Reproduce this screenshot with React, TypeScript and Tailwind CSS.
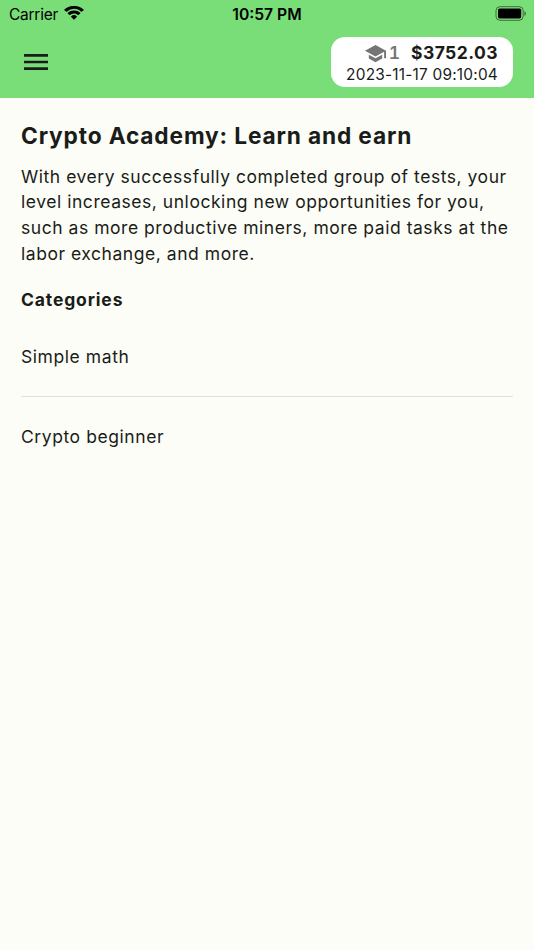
import { MdMenu, MdSchool } from 'react-icons/md';

const categories = ['Simple math', 'Crypto beginner'];

function StatusBar() {
  return (
    <div className="grid h-7 grid-cols-3 items-center pl-[9px] pr-[7px] text-black">
      <div className="flex items-center gap-[6px]">
        <span className="mt-px text-[15.5px] leading-none tracking-[-0.25px]">Carrier</span>
        <svg className="mb-[2px]" width="20" height="14" viewBox="0 0 20 14" fill="currentColor">
          <path d="M10 2.8c2.8 0 5.3 1.1 7.2 2.9.1.1.4.1.5 0l1.9-1.5c.2-.2.2-.4 0-.6A13.5 13.5 0 0 0 10 0 13.5 13.5 0 0 0 .4 3.6c-.2.2-.2.4 0 .6l1.9 1.5c.1.1.4.1.5 0A10.4 10.4 0 0 1 10 2.8z" />
          <path d="M10 7.4c1.5 0 2.9.6 4 1.5.2.1.4.1.5 0l1.7-1.5c.2-.2.2-.4 0-.6A9 9 0 0 0 10 4.6a9 9 0 0 0-6.2 2.2c-.2.2-.2.4 0 .6l1.7 1.5c.1.1.3.1.5 0a6 6 0 0 1 4-1.5z" />
          <path d="M12.8 10.3c.2.2.2.4 0 .6l-2.5 2.7c-.2.2-.4.2-.6 0l-2.5-2.7c-.2-.2-.2-.4 0-.6a4.3 4.3 0 0 1 5.6 0z" />
        </svg>
      </div>
      <div className="mr-[2px] mt-px whitespace-nowrap text-center text-[15.7px] font-semibold leading-none">
        10:57 PM
      </div>
      <div className="flex justify-end">
        <svg className="mb-[2px]" width="32" height="15" viewBox="0 0 32 15">
          <rect x="1" y="0.7" width="27.2" height="13.6" rx="4" fill="none" stroke="#000" strokeOpacity="0.5" />
          <rect x="3" y="2.6" width="23.2" height="9.8" rx="1.6" />
          <path d="M29.4 5.2v4.6c1-.4 1.5-1.3 1.5-2.3s-.5-1.9-1.5-2.3z" fillOpacity="0.5" />
        </svg>
      </div>
    </div>
  );
}

export default function App() {
  return (
    <div className="min-h-screen bg-[#fcfdf6] font-['Inter',sans-serif] text-[#1a1c19]">
      <header className="h-[98px] bg-[#7ade78]">
        <StatusBar />
        <div className="flex items-start justify-between px-5 pt-[9px]">
          <button type="button" aria-label="Menu" className="mt-[9px]">
            <MdMenu size={32} />
          </button>
          <div className="mr-px flex h-[50px] w-[182px] flex-col items-end rounded-[14px] bg-white pr-[15px] pt-[5px]">
            <div className="flex h-[22px] items-center text-[17.5px] font-bold leading-[22px]">
              <MdSchool size={23} className="mr-[2px] text-[#757575]" />
              <span className="mr-[11px] font-semibold tabular-nums text-[#757575]">1</span>
              <span className="tracking-[0.45px]">$3752.03</span>
            </div>
            <div className="mt-px whitespace-nowrap text-[15.4px] leading-5 tracking-[0.22px]">
              2023-11-17 09:10:04
            </div>
          </div>
        </div>
      </header>

      <main className="px-[21px] pt-[21px]">
        <h1 className="whitespace-nowrap text-[22.7px] font-bold leading-[33px] tracking-[0.85px]">
          Crypto Academy: Learn and earn
        </h1>
        <p className="mt-[11.5px] whitespace-nowrap text-[17.5px] leading-[25.8px] tracking-[0.54px]">
          With every successfully completed group of tests, your
          <br />
          level increases, unlocking new opportunities for you,
          <br />
          such as more productive miners, more paid tasks at the
          <br />
          labor exchange, and more.
        </p>
        <h2 className="mt-[20.5px] text-[17.5px] font-bold leading-[26px] tracking-[0.85px]">Categories</h2>
        <ul className="mt-1 divide-y divide-[#e0e1db]">
          {categories.map((name) => (
            <li key={name} className="flex h-20 items-center text-[17.5px] tracking-[0.57px]">
              {name}
            </li>
          ))}
        </ul>
      </main>
    </div>
  );
}
